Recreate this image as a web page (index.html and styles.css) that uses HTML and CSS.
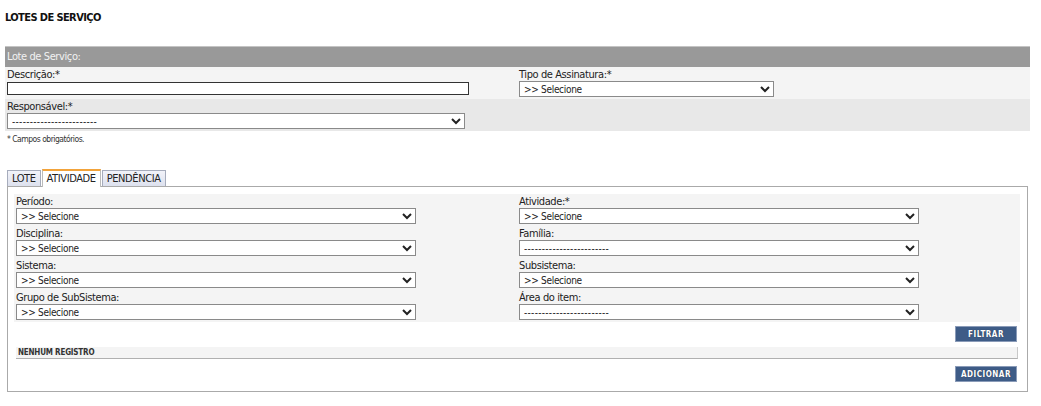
FILE: index.html
```html
<!DOCTYPE html>
<html lang="pt-BR">
<head>
<meta charset="utf-8">
<title>Lotes de Serviço</title>
<link rel="stylesheet" href="styles.css">
</head>
<body>
<div class="page">
  <h1 class="title">LOTES DE SERVIÇO</h1>

  <div class="form-box">
    <div class="form-head">Lote de Serviço:</div>
    <div class="form-row row-light">
      <div class="cell">
        <label class="lbl">Descrição:*</label>
        <input class="text-input w-desc" type="text">
      </div>
      <div class="cell">
        <label class="lbl">Tipo de Assinatura:*</label>
        <select class="sel w-tipo"><option>&gt;&gt; Selecione</option></select>
      </div>
    </div>
    <div class="form-row row-dark">
      <div class="cell">
        <label class="lbl">Responsável:*</label>
        <select class="sel sel-dash w-resp"><option>------------------------</option></select>
      </div>
      <div class="cell"></div>
    </div>
  </div>

  <p class="note">* Campos obrigatórios.</p>

  <div class="tabs">
    <div class="tab">LOTE</div>
    <div class="tab tab-active">ATIVIDADE</div>
    <div class="tab">PENDÊNCIA</div>
  </div>

  <div class="panel">
    <div class="filters">
      <div class="fcell">
        <label class="lbl">Período:</label>
        <select class="sel w-f"><option>&gt;&gt; Selecione</option></select>
      </div>
      <div class="fcell">
        <label class="lbl">Atividade:*</label>
        <select class="sel w-f"><option>&gt;&gt; Selecione</option></select>
      </div>
      <div class="fcell">
        <label class="lbl">Disciplina:</label>
        <select class="sel w-f"><option>&gt;&gt; Selecione</option></select>
      </div>
      <div class="fcell">
        <label class="lbl">Família:</label>
        <select class="sel sel-dash w-f"><option>------------------------</option></select>
      </div>
      <div class="fcell">
        <label class="lbl">Sistema:</label>
        <select class="sel w-f"><option>&gt;&gt; Selecione</option></select>
      </div>
      <div class="fcell">
        <label class="lbl">Subsistema:</label>
        <select class="sel w-f"><option>&gt;&gt; Selecione</option></select>
      </div>
      <div class="fcell">
        <label class="lbl">Grupo de SubSistema:</label>
        <select class="sel w-f"><option>&gt;&gt; Selecione</option></select>
      </div>
      <div class="fcell">
        <label class="lbl">Área do item:</label>
        <select class="sel sel-dash w-f"><option>------------------------</option></select>
      </div>
    </div>

    <div class="actions"><button class="btn" type="button">FILTRAR</button></div>

    <div class="empty-bar">NENHUM REGISTRO</div>

    <div class="actions actions-bottom"><button class="btn" type="button">ADICIONAR</button></div>
  </div>
</div>
</body>
</html>
```

FILE: styles.css
```css
html, body {
  margin: 0;
  padding: 0;
  background: #ffffff;
}

body {
  font-family: "DejaVu Sans Condensed", "DejaVu Sans", sans-serif;
  font-size: 11px;
  color: #222;
}

.page {
  padding: 0 11px 0 5px;
}

.title {
  margin: 0;
  padding-top: 11px;
  font-size: 11px;
  line-height: 14px;
  font-weight: bold;
  letter-spacing: -0.6px;
  color: #111;
}

.form-box {
  margin-top: 21px;
}

.form-head {
  height: 20px;
  line-height: 20px;
  border-top: 1px solid #c4c4c4;
  background: #999999;
  color: #f2f2f2;
  padding-left: 2px;
  font-size: 11px;
  letter-spacing: -0.4px;
}

.form-row {
  display: grid;
  grid-template-columns: 512px 1fr;
  height: 32px;
}

.row-light { background: #f4f4f4; }
.row-dark { background: #e8e8e8; }

.cell {
  padding: 2px 2px;
  display: flex;
  flex-direction: column;
  align-items: flex-start;
}

.lbl {
  display: block;
  line-height: 12px;
  height: 12px;
  font-size: 11px;
  letter-spacing: -0.4px;
  color: #222;
  white-space: nowrap;
}

.text-input {
  box-sizing: border-box;
  height: 13px;
  margin: 1px 0 0 0;
  padding: 0;
  border: 1px solid #333;
  background: #fff;
}

.w-desc { width: 462px; }

.sel {
  box-sizing: border-box;
  height: 16px;
  margin: 0;
  padding: 0;
  border: 1px solid #8a8a8a;
  border-radius: 0;
  background: #fff;
  font-family: "DejaVu Sans Condensed", "DejaVu Sans", sans-serif;
  font-size: 10px;
  letter-spacing: -0.3px;
  color: #222;
}

.sel-dash {
  letter-spacing: 0.3px;
}

.w-tipo { width: 255px; }
.w-resp { width: 458px; }
.w-f { width: 400px; }

.note {
  margin: 3px 0 0 2px;
  font-size: 8.5px;
  line-height: 11px;
  letter-spacing: -0.5px;
  color: #333;
}

.tabs {
  display: flex;
  align-items: flex-end;
  gap: 1px;
  margin: 24px 0 0 2px;
  height: 17px;
}

.tab {
  box-sizing: border-box;
  height: 16px;
  padding: 0 4px;
  line-height: 15px;
  border: 1px solid #a6acbc;
  border-bottom: none;
  background: linear-gradient(#f2f3f9, #dde1ee);
  font-size: 11px;
  letter-spacing: -0.4px;
  color: #222;
}

.tab-active {
  height: 18px;
  margin-bottom: -1px;
  border-top: 2px solid #f2a33a;
  border-left-color: #bbb;
  border-right-color: #bbb;
  background: #fff;
  position: relative;
}

.panel {
  margin: 0 2px;
  border: 1px solid #aaaaaa;
  padding: 7px 7px 9px 6px;
}

.filters {
  display: grid;
  grid-template-columns: 1fr 1fr;
  background: #f4f4f4;
}

.fcell {
  height: 32px;
  box-sizing: border-box;
  padding: 2px 2px;
}

.actions {
  display: flex;
  justify-content: flex-end;
  padding: 4px 3px 0 0;
}

.actions-bottom {
  padding-top: 7px;
}

.btn {
  box-sizing: border-box;
  width: 62px;
  height: 16px;
  margin: 0;
  padding: 0;
  border: 1px solid #8a9bb8;
  background: #3e5c87;
  color: #fff;
  font-family: "DejaVu Sans Condensed", "DejaVu Sans", sans-serif;
  font-size: 8px;
  font-weight: bold;
  letter-spacing: 0.5px;
  text-shadow: 0 0 1px #1d2d45;
}

.empty-bar {
  margin: 5px 2px 0 2px;
  height: 12px;
  box-sizing: border-box;
  background: #f4f4f4;
  border-right: 1px solid #c8c8c8;
  border-bottom: 1px solid #b0b0b0;
  padding-left: 2px;
  font-size: 8px;
  line-height: 11px;
  font-weight: bold;
  letter-spacing: -0.2px;
  color: #333;
}
```
